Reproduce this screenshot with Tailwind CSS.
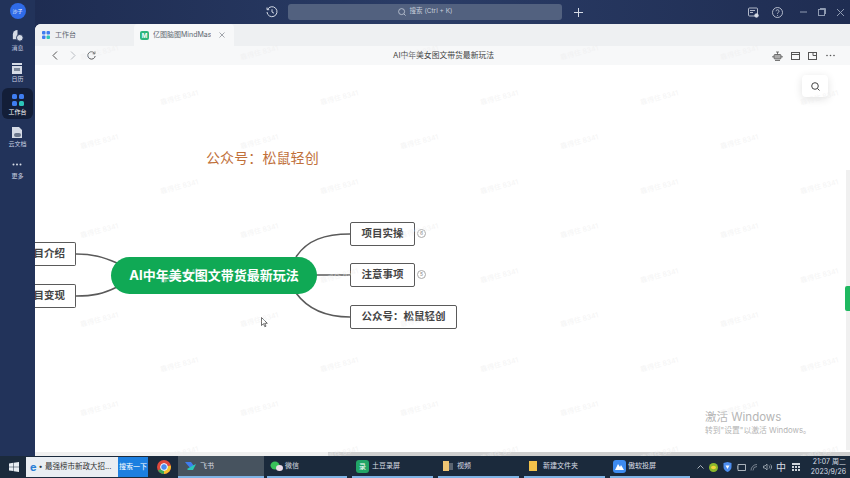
<!DOCTYPE html>
<html lang="zh">
<head>
  <meta charset="UTF-8" />
  <title>AI中年美女图文带货最新玩法</title>
  <script src="https://cdn.jsdelivr.net/npm/@tailwindcss/browser@4"></script>
</head>
<body class="w-[850px] h-[478px] overflow-hidden flex flex-col bg-[#22335a] font-['Inter','Noto_Sans_CJK_SC',sans-serif]">
  <div class="flex flex-1 min-h-0 bg-gradient-to-r from-[#1d2b50] via-[#2a3c66] to-[#1f2d52]">
    <!-- Sidebar -->
    <aside class="w-[35px] shrink-0 flex flex-col items-center text-[#c9d2e2] text-[6px] leading-[8px] bg-[#22335a]">
      <div class="w-4 h-4 mt-[3px] rounded-full bg-[#2f6be8] text-white text-[5px] flex items-center justify-center">沙子</div>
      <div class="mt-[10px] flex flex-col items-center gap-[2px]">
        <svg width="13" height="13" viewBox="0 0 14 14"><path d="M7 1a5 5 0 0 0-5 5v5h5z" fill="#d5dbe6"/><circle cx="9.500" cy="9.500" r="3.600" fill="#d5dbe6" stroke="#22335a"/></svg>
        <span>消息</span>
      </div>
      <div class="mt-[10px] flex flex-col items-center">
        <svg width="12" height="13" viewBox="0 0 12 13"><rect x="1" y="1" width="10" height="11" fill="#d5dbe6"/><rect x="1" y="3" width="10" height="1" fill="#22335a"/><rect x="3" y="6" width="6" height="3" fill="#7c8799"/></svg>
        <span>日历</span>
      </div>
      <div class="mt-[5px] w-[31px] h-[31px] rounded-md bg-[#131e38] flex flex-col items-center pt-[6px] gap-[2px] text-white">
        <svg width="12" height="12" viewBox="0 0 12 12"><rect width="5" height="5" rx="1.500" fill="#3f7df0"/><rect x="7" width="5" height="5" rx="1.500" fill="#3f7df0"/><rect y="7" width="5" height="5" rx="1.500" fill="#3f7df0"/><rect x="7" y="7" width="5" height="5" rx="1.500" fill="#2cc6b8"/></svg>
        <span>工作台</span>
      </div>
      <div class="mt-[7px] flex flex-col items-center gap-[1px]">
        <svg width="12" height="13" viewBox="0 0 12 13"><path d="M1 1h7l3 3v8H1z" fill="#d5dbe6"/><rect x="3" y="7" width="7" height="4" rx="2" fill="#6b778c"/></svg>
        <span>云文档</span>
      </div>
      <div class="mt-[15px] flex flex-col items-center gap-[6px]">
        <svg width="10" height="3" viewBox="0 0 10 3" fill="#d5dbe6"><circle cx="1.500" cy="1.500" r="1"/><circle cx="5" cy="1.500" r="1"/><circle cx="8.500" cy="1.500" r="1"/></svg>
        <span>更多</span>
      </div>
    </aside>

    <div class="flex-1 min-w-0 flex flex-col">
      <!-- Title bar -->
      <header class="h-[24px] shrink-0 flex items-center text-[#d5dbe6]">
        <svg class="ml-[231px]" width="12" height="12" viewBox="0 0 12 12" fill="none" stroke="currentColor"><path d="M1.500 3.500A5 5 0 1 1 1 6"/><path d="M1 1.500v2.200h2.200M6 3.300V6l2 1.200"/></svg>
        <div class="ml-[10px] w-[274px] h-[16px] rounded-[3px] bg-[#52617f] flex items-center justify-center gap-[4px] text-[6.500px] text-[#c6cedb]">
          <svg width="8" height="8" viewBox="0 0 8 8" fill="none" stroke="currentColor" stroke-width=".8"><circle cx="3.600" cy="3.600" r="3"/><path d="M6 6l1.600 1.600"/></svg>
          <span>搜索 (Ctrl + K)</span>
        </div>
        <svg class="ml-[12px]" width="9" height="9" viewBox="0 0 9 9" stroke="currentColor"><path d="M4.500 0v9M0 4.500h9"/></svg>
        <svg class="ml-[165px]" width="11" height="11" viewBox="0 0 11 11" fill="none" stroke="currentColor" stroke-width=".8"><rect x=".5" y="1" width="9" height="8" rx="1"/><path d="M2 3.500h5M2 5.500h3"/><circle cx="8.500" cy="8.500" r="1.800" fill="currentColor"/></svg>
        <svg class="ml-[13px]" width="11" height="11" viewBox="0 0 11 11" fill="none" stroke="currentColor" stroke-width=".8"><circle cx="5.500" cy="5.500" r="5"/><path d="M4 4.200a1.500 1.500 0 1 1 2.300 1.300c-.6.400-.8.600-.8 1.200M5.500 8v.8"/></svg>
        <svg class="ml-[17px] text-[#8f9bb2]" width="8" height="8" viewBox="0 0 8 8" stroke="currentColor"><path d="M0 4h7"/></svg>
        <svg class="ml-[10px] text-[#8f9bb2]" width="8" height="8" viewBox="0 0 8 8" fill="none" stroke="currentColor"><rect x=".5" y="1.500" width="6" height="6"/><path d="M2 .5h5.500V6"/></svg>
        <svg class="ml-[11px] text-[#8f9bb2]" width="7" height="7" viewBox="0 0 7 7" stroke="currentColor"><path d="M0 0l7 7M7 0L0 7"/></svg>
      </header>

      <!-- Window -->
      <main id="page" class="relative flex-1 min-h-0 bg-white rounded-tl-[6px] flex flex-col overflow-hidden">
        <div class="h-[22px] shrink-0 flex items-end bg-[#eef0f2] text-[7px] text-[#606770]">
          <div class="w-[99px] h-[22px] flex items-center pl-[7px] gap-[5px]">
            <svg width="8" height="8" viewBox="0 0 8 8"><rect width="3.500" height="3.500" rx="1" fill="#3f7df0"/><rect x="4.500" width="3.500" height="3.500" rx="1" fill="#3f7df0"/><rect y="4.500" width="3.500" height="3.500" rx="1" fill="#3f7df0"/><rect x="4.500" y="4.500" width="3.500" height="3.500" rx="1" fill="#2cc6b8"/></svg>
            <span>工作台</span>
          </div>
          <div class="w-[100px] h-[22px] flex items-center pl-[6px] bg-[#f7f8f9] rounded-t-[4px]">
            <span class="w-[9px] h-[9px] rounded-[2px] bg-[#2fb67c] text-white text-[6px] leading-[9px] text-center font-bold">M</span>
            <span class="ml-[4px] w-[58px] overflow-hidden whitespace-nowrap">亿图脑图MindMaster</span>
            <svg class="ml-[8px]" width="6" height="6" viewBox="0 0 6 6" stroke="#7d838b" stroke-width=".7"><path d="M.5.5l5 5M5.500.5l-5 5"/></svg>
          </div>
        </div>
        <div class="h-[19px] shrink-0 flex items-center bg-[#f7f8f9] text-[#555]">
          <svg class="ml-[17px]" width="6" height="9" viewBox="0 0 6 9" fill="none" stroke="currentColor"><path d="M5 .5l-4 4 4 4"/></svg>
          <svg class="ml-[12px] text-[#b8bcc2]" width="6" height="9" viewBox="0 0 6 9" fill="none" stroke="currentColor"><path d="M1 .5l4 4-4 4"/></svg>
          <svg class="ml-[11px]" width="9" height="9" viewBox="0 0 9 9" fill="none" stroke="currentColor"><path d="M7.700 2.500A3.700 3.700 0 1 0 8.200 5"/><path d="M8 .5v2.300H5.700"/></svg>
          <span class="ml-[297px] text-[7.800px] text-[#444]">AI中年美女图文带货最新玩法</span>
          <div class="ml-auto mr-[15px] flex items-center gap-[8px] text-[#555]">
            <svg width="11" height="10" viewBox="0 0 11 10" fill="none" stroke="currentColor" stroke-width=".8"><rect x="2" y="3.500" width="7" height="4.500" rx="1" fill="#aaa"/><path d="M5.500 3.500V1M4 1h3M0 5.800h2M9 5.800h2M3 9.500h5"/></svg>
            <svg width="9" height="8" viewBox="0 0 9 8" fill="none" stroke="currentColor"><rect x=".5" y=".5" width="8" height="7"/><path d="M.5 2.500h8"/></svg>
            <svg width="9" height="8" viewBox="0 0 9 8" fill="none" stroke="currentColor"><rect x=".5" y=".5" width="8" height="7"/><path d="M5 .5v3h3.500"/></svg>
            <svg class="ml-[1px]" width="9" height="3" viewBox="0 0 9 3" fill="currentColor"><circle cx="1" cy="1.500" r=".8"/><circle cx="4.500" cy="1.500" r=".8"/><circle cx="8" cy="1.500" r=".8"/></svg>
          </div>
        </div>

        <!-- Canvas: mind map nodes sit at free positions -->
        <div class="relative flex-1 bg-white overflow-hidden text-[#444]">
          <div class="absolute left-[767px] top-[10px] w-[26px] h-[22px] rounded-[4px] bg-white shadow-[0_2px_8px_rgba(0,0,0,0.12)] flex items-center justify-center">
            <svg width="9" height="9" viewBox="0 0 9 9" fill="none" stroke="#444"><circle cx="4" cy="4" r="3.300"/><path d="M6.500 6.500L8.500 8.500"/></svg>
          </div>
          <p class="absolute left-[171px] top-[83px] text-[14px] leading-[20px] text-[#c0703a] tracking-[0.1px]">公众号：松鼠轻创</p>

          <div class="absolute left-0 top-[65px] w-[815px] h-[240px]">
            <svg class="absolute left-0 top-0" width="460" height="240" fill="none" stroke="#5a5a5a" stroke-width="1.600">
              <path d="M41 124C58 124 68 127 82 133"/>
              <path d="M41 166C58 166 68 164 82 157"/>
              <path d="M261 127C272 110 290 104 315 104"/>
              <path d="M280 145H315"/>
              <path d="M261 163C272 178 290 187 315 187"/>
            </svg>

            <div class="absolute left-0 top-[112px] w-[41px] h-[24px] bg-white border-y-[1.500px] border-r-[1.500px] border-[#5a5a5a] rounded-r-[2px] overflow-hidden flex items-center justify-end pr-[10px] text-[10.500px] font-semibold whitespace-nowrap">目介绍</div>
            <div class="absolute left-0 top-[154px] w-[41px] h-[24px] bg-white border-y-[1.500px] border-r-[1.500px] border-[#5a5a5a] rounded-r-[2px] overflow-hidden flex items-center justify-end pr-[10px] text-[10.500px] font-semibold whitespace-nowrap">目变现</div>

            <div class="absolute left-[76px] top-[127px] w-[206px] h-[37px] rounded-full bg-[#10a955] text-white text-[13px] font-bold flex items-center justify-center whitespace-nowrap">AI中年美女图文带货最新玩法</div>

            <div class="absolute left-[315px] top-[92px] w-[65px] h-[24px] bg-white border-[1.500px] border-[#5a5a5a] rounded-[2px] flex items-center justify-center text-[10.500px] font-semibold">项目实操</div>
            <div class="absolute left-[382px] top-[99px] w-[9px] h-[9px] rounded-full border border-[#aaa] text-[5px] leading-[7px] text-center text-[#888]">6</div>
            <div class="absolute left-[315px] top-[133px] w-[65px] h-[24px] bg-white border-[1.500px] border-[#5a5a5a] rounded-[2px] flex items-center justify-center text-[10.500px] font-semibold">注意事项</div>
            <div class="absolute left-[382px] top-[140px] w-[9px] h-[9px] rounded-full border border-[#aaa] text-[5px] leading-[7px] text-center text-[#888]">5</div>
            <div class="absolute left-[315px] top-[175px] w-[107px] h-[24px] bg-white border-[1.500px] border-[#5a5a5a] rounded-[2px] flex items-center justify-center text-[10.500px] font-semibold whitespace-nowrap">公众号：松鼠轻创</div>
          </div>

          <svg class="absolute left-[226px] top-[252px]" width="7" height="11" viewBox="0 0 7 11"><path d="M.5.5v8l2-1.800 1.300 3 1.200-.5-1.300-2.900h2.600z" fill="#fff" stroke="#333" stroke-width=".7"/></svg>

          <div class="absolute left-[670px] top-[345px] text-[#b5b5b5] whitespace-nowrap">
            <p class="text-[11.500px] leading-[15px]">激活 Windows</p>
            <p class="text-[7.800px] leading-[10px]">转到"设置"以激活 Windows。</p>
          </div>

          <div class="absolute right-0 top-[105px] w-[4px] h-[280px] bg-[#f0f0f0]"></div>
          <div class="absolute right-0 top-[221px] w-[5px] h-[25px] rounded-l-[2px] bg-[#1fb860]"></div>
          <div class="absolute left-0 right-0 bottom-0 h-[4px] bg-[#f0f0f0]">
            <div class="ml-[293px] h-full bg-[#cfcfcf]"></div>
          </div>
        </div>
      </main>
    </div>
  </div>

  <!-- Windows taskbar -->
  <footer class="h-[22px] shrink-0 flex items-center bg-[#1b2a3c] text-[#d8dde3] text-[7px] whitespace-nowrap">
    <svg class="ml-[9px]" width="10" height="10" viewBox="0 0 10 10" fill="#e8edf2"><path d="M0 1.400l4.300-.6v3.900H0zM4.800.7L10 0v4.700H4.800zM0 5.200h4.300v3.900L0 8.500zM4.800 5.200H10V10l-5.200-.7z"/></svg>
    <div class="ml-[7px] w-[92px] h-[20px] bg-[#e9edf2] flex items-center text-[#333]">
      <span class="ml-[4px] text-[#2b7fd6] text-[11px] font-bold leading-none">e</span>
      <span class="ml-[2px] text-[7.500px]">• 最强榜市新政大招...</span>
    </div>
    <div class="w-[30px] h-[20px] bg-[#1c7fe0] text-white text-[7px] flex items-center justify-center">搜索一下</div>
    <svg class="ml-[9px]" width="14" height="14" viewBox="0 0 14 14"><circle cx="7" cy="7" r="7" fill="#e0483c"/><path d="M7 7L1 10.500A7 7 0 0 0 7 14z" fill="#3aa757"/><path d="M7 7l6.800-1.500A7 7 0 0 1 7 14z" fill="#f5c02e"/><circle cx="7" cy="7" r="3.400" fill="#4a8bf0" stroke="#fff"/></svg>
    <div class="ml-[7px] w-[86px] h-[22px] bg-[#47535f] flex items-center pl-[6px] gap-[3px] border-b-2 border-[#7fb4e6]">
      <svg width="13" height="10" viewBox="0 0 13 10"><path d="M1 1h6l3 4-3 3z" fill="#3f7df0"/><path d="M3 8l5-3 4-2-3 6H4z" fill="#2cc6b8"/></svg>
      <span>飞书</span>
    </div>
    <div class="ml-[3px] w-[80px] h-[22px] flex items-center pl-[3px] gap-[2px] border-b-2 border-[#7fb4e6]">
      <svg width="13" height="11" viewBox="0 0 13 11"><ellipse cx="5" cy="4.500" rx="4.500" ry="4" fill="#39c15a"/><ellipse cx="9.500" cy="7" rx="3.500" ry="3" fill="#ecdce8"/></svg>
      <span>微信</span>
    </div>
    <div class="ml-[5px] w-[81px] h-[22px] flex items-center pl-[4px] gap-[3px] border-b-2 border-[#7fb4e6]">
      <span class="w-[13px] h-[13px] rounded-[3px] bg-[#21a566] text-white text-[7px] leading-[13px] text-center">录</span>
      <span>土豆录屏</span>
    </div>
    <div class="ml-[5px] w-[81px] h-[22px] flex items-center pl-[5px] gap-[4px] border-b-2 border-[#7fb4e6]">
      <svg width="10" height="12" viewBox="0 0 10 12"><path d="M0 1h6v10H0z" fill="#f0c674"/><path d="M6 3h4v7H6z" fill="#5b6470"/></svg>
      <span>视频</span>
    </div>
    <div class="ml-[5px] w-[81px] h-[22px] flex items-center pl-[5px] gap-[6px] border-b-2 border-[#7fb4e6]">
      <svg width="8" height="12" viewBox="0 0 8 12"><path d="M0 1h8v10H0z" fill="#f2c14a"/></svg>
      <span>新建文件夹</span>
    </div>
    <div class="ml-[5px] w-[80px] h-[22px] flex items-center pl-[3px] gap-[2px] border-b-2 border-[#7fb4e6]">
      <svg width="13" height="13" viewBox="0 0 13 13"><rect width="13" height="13" rx="3" fill="#3d8bf0"/><path d="M2 10l3-6 2 3 1-2 3 5z" fill="#fff"/></svg>
      <span>傲软投屏</span>
    </div>
    <svg class="ml-[7px]" width="7" height="4" viewBox="0 0 7 4" fill="none" stroke="#cfd5db" stroke-width=".8"><path d="M.5 3.500l3-3 3 3"/></svg>
    <svg class="ml-[5px]" width="9" height="9" viewBox="0 0 9 9"><circle cx="4.500" cy="4.500" r="4.500" fill="#8bb82c"/><ellipse cx="4.500" cy="4.500" rx="2.500" ry="1.800" fill="#f2d43a"/></svg>
    <svg class="ml-[5px]" width="9" height="10" viewBox="0 0 9 10"><path d="M.5 1L4.500 0l4 1v4c0 2.500-2 4-4 5-2-1-4-2.500-4-5z" fill="#4d8ef0"/><path d="M2.500 3.500h4L4.500 7z" fill="#fff"/></svg>
    <svg class="ml-[5px]" width="9" height="7" viewBox="0 0 9 7" fill="none" stroke="#cfd5db" stroke-width=".8"><path d="M1 .5h7.500v6H1zM0 2v3"/></svg>
    <svg class="ml-[4px]" width="8" height="8" viewBox="0 0 8 8" fill="none" stroke="#8f98a3" stroke-width=".8"><path d="M1 7.500A6 6 0 0 1 7 1.500M3 7.500A4 4 0 0 1 7 3.500"/></svg>
    <svg class="ml-[5px]" width="9" height="8" viewBox="0 0 9 8" fill="none" stroke="#aab2bb" stroke-width=".8"><path d="M.5 3v2h1.500L4 7V1L2 3zM6 2.500c1 1 1 2 0 3M7.500 1.500c1.500 1.500 1.500 3.500 0 5"/></svg>
    <span class="ml-[4px] text-[10px] leading-none">中</span>
    <svg class="ml-[6px]" width="8" height="8" viewBox="0 0 8 8" fill="#cfd5db"><path d="M0 0h8v2H0zM0 3h2v2H0zM3 3h2v2H3zM6 3h2v2H6zM0 6h2v2H0zM3 6h2v2H3zM6 6h2v2H6z"/></svg>
    <div class="ml-[10px] w-[36px] text-[7px] leading-[10px] text-right">
      <p>21:07 周二</p>
      <p>2023/9/26</p>
    </div>
  </footer>

  <script>
    // Faint repeated watermark over the whole window
    const page = document.getElementById('page');
    for (let row = 0; row < 10; row++) {
      for (let col = 0; col < 6; col++) {
        const mark = document.createElement('span');
        mark.className = 'absolute -rotate-[15deg] text-[7px] text-[#ededed]/60 whitespace-nowrap pointer-events-none';
        mark.textContent = '靠得住 8341';
        mark.style.left = (row % 2 ? 125 : 45) + col * 160 + 'px';
        mark.style.top = row * 44.5 + 24 + 'px';
        page.appendChild(mark);
      }
    }
  </script>
</body>
</html>
